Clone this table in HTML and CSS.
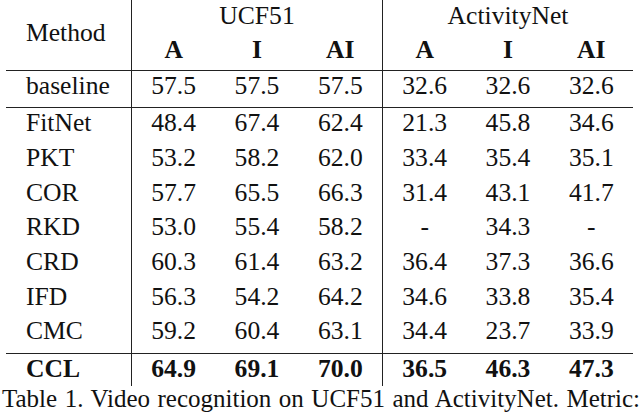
FILE: index.html
```html
<!DOCTYPE html>
<html lang="en">
<head>
    <meta charset="UTF-8">
    <meta name="viewport" content="width=device-width, initial-scale=1.0">
    <title>Table 1 - Video recognition</title>
    <link rel="stylesheet" href="styles.css">
</head>
<body>
    <table class="results">
        <colgroup>
            <col class="col-method">
            <col class="col-num"><col class="col-num"><col class="col-num col-sep">
            <col class="col-num"><col class="col-num"><col class="col-num">
        </colgroup>
        <thead>
            <tr class="head-top">
                <th rowspan="2" class="method sep">Method</th>
                <th colspan="3" class="group sep">UCF51</th>
                <th colspan="3" class="group">ActivityNet</th>
            </tr>
            <tr class="head-sub">
                <th>A</th><th>I</th><th class="sep">AI</th>
                <th>A</th><th>I</th><th>AI</th>
            </tr>
        </thead>
        <tbody>
            <tr class="base">
                <td class="name sep">baseline</td>
                <td>57.5</td><td>57.5</td><td class="sep">57.5</td>
                <td>32.6</td><td>32.6</td><td>32.6</td>
            </tr>
            <tr>
                <td class="name sep">FitNet</td>
                <td>48.4</td><td>67.4</td><td class="sep">62.4</td>
                <td>21.3</td><td>45.8</td><td>34.6</td>
            </tr>
            <tr>
                <td class="name sep">PKT</td>
                <td>53.2</td><td>58.2</td><td class="sep">62.0</td>
                <td>33.4</td><td>35.4</td><td>35.1</td>
            </tr>
            <tr>
                <td class="name sep">COR</td>
                <td>57.7</td><td>65.5</td><td class="sep">66.3</td>
                <td>31.4</td><td>43.1</td><td>41.7</td>
            </tr>
            <tr>
                <td class="name sep">RKD</td>
                <td>53.0</td><td>55.4</td><td class="sep">58.2</td>
                <td>-</td><td>34.3</td><td>-</td>
            </tr>
            <tr>
                <td class="name sep">CRD</td>
                <td>60.3</td><td>61.4</td><td class="sep">63.2</td>
                <td>36.4</td><td>37.3</td><td>36.6</td>
            </tr>
            <tr>
                <td class="name sep">IFD</td>
                <td>56.3</td><td>54.2</td><td class="sep">64.2</td>
                <td>34.6</td><td>33.8</td><td>35.4</td>
            </tr>
            <tr class="last">
                <td class="name sep">CMC</td>
                <td>59.2</td><td>60.4</td><td class="sep">63.1</td>
                <td>34.4</td><td>23.7</td><td>33.9</td>
            </tr>
            <tr class="ours">
                <td class="name sep">CCL</td>
                <td>64.9</td><td>69.1</td><td class="sep">70.0</td>
                <td>36.5</td><td>46.3</td><td>47.3</td>
            </tr>
        </tbody>
    </table>

    <p class="caption">Table 1. Video recognition on UCF51 and ActivityNet. Metric:</p>
</body>
</html>
```

FILE: styles.css
```css
body {
    margin: 0;
    padding: 0;
    background: #fff;
    color: #111;
    font-family: "Liberation Serif", "Times New Roman", serif;
    overflow: hidden;
}

.results {
    margin-left: 6px;
    width: 627px;
    table-layout: fixed;
    border-collapse: separate;
    border-spacing: 0;
    font-size: 25.6px;
}

.col-method { width: 126px; }
.col-num { width: 83.33px; }
.col-sep { width: 84.34px; }

.results th,
.results td {
    padding: 0.4px 0 4.27px;
    line-height: 30px;
    text-align: center;
    font-weight: normal;
    box-sizing: border-box;
}

.results .sep {
    border-right: 1px solid #222;
}

/* method names sit flush left */
.results .name,
.results th.method {
    text-align: left;
    padding-left: 20px;
}

/* header */
.head-top th {
    padding-top: 1.4px;
    padding-bottom: 4px;
}

.head-sub th {
    padding-top: 0;
    padding-bottom: 5.1px;
    font-weight: bold;
    border-bottom: 1px solid #222;
}

.results th.method {
    vertical-align: middle;
    padding-bottom: 6px;
    border-bottom: 1px solid #222;
}

/* body rows */
.results .base td {
    padding-top: 0;
    padding-bottom: 5.5px;
    border-bottom: 1px solid #222;
}

.results .last td {
    padding-bottom: 6.6px;
    border-bottom: 1px solid #222;
}

.results .ours td {
    padding-top: 0;
    padding-bottom: 2px;
    font-weight: bold;
}

.caption {
    margin: 0 0 0 2px;
    font-size: 25px;
    line-height: 26px;
    text-align: justify;
    text-align-last: justify;
}
```
